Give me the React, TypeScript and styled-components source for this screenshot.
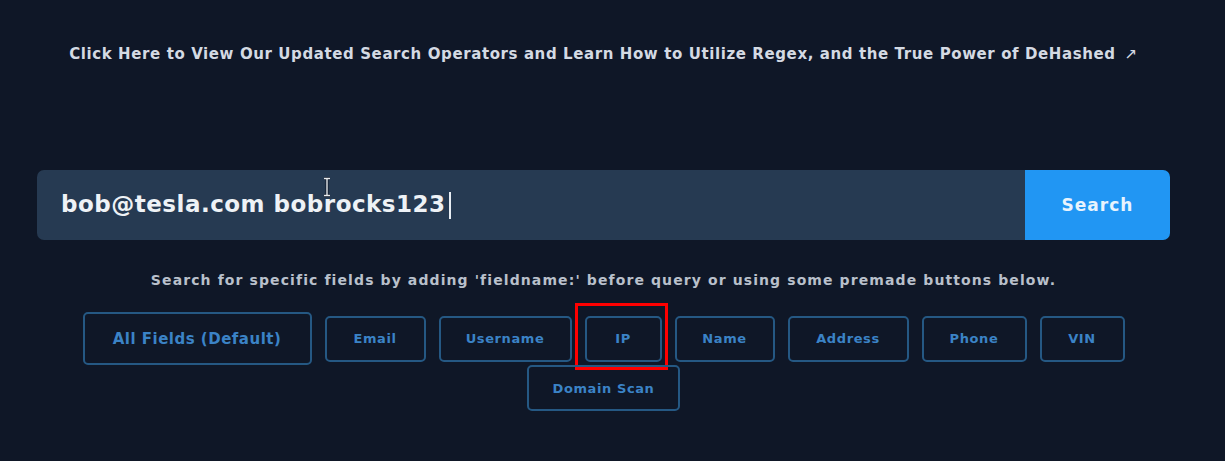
import React from "react";
import styled, { createGlobalStyle } from "styled-components";

const Global = createGlobalStyle`
  html, body { margin: 0; padding: 0; background: #0f1727; }
  body { font-family: "DejaVu Sans", "Noto Sans", sans-serif; }
`;

const Page = styled.div`
  width: 1225px;
  height: 461px;
  background: #0f1727;
  overflow: hidden;
`;

const Container = styled.div`
  width: 1133px;
  margin-left: 37px;
  display: flex;
  flex-direction: column;
  align-items: center;
`;

const InfoLink = styled.a`
  margin-top: 44px;
  font-size: 15px;
  font-weight: bold;
  letter-spacing: 0.6px;
  color: #d4dae3;
  text-decoration: none;
  line-height: 20px;
  white-space: nowrap;
`;

const Arrow = styled.span`
  margin-left: 9px;
  font-weight: normal;
`;

const SearchBar = styled.form`
  margin-top: 106px;
  width: 100%;
  height: 70px;
  display: flex;
  border-radius: 7px;
  overflow: hidden;
`;

const InputBox = styled.div`
  position: relative;
  flex: 1;
  background: #263a52;
  display: flex;
  align-items: center;
  padding-left: 24px;
`;

const InputText = styled.span`
  font-size: 23px;
  font-weight: bold;
  letter-spacing: 0.5px;
  color: #eef2f6;
  white-space: nowrap;
`;

const Caret = styled.span`
  display: inline-block;
  width: 2px;
  height: 27px;
  margin-left: 3px;
  background: #e8edf3;
  vertical-align: middle;
`;

const IBeam = styled.svg`
  position: absolute;
  left: 285px;
  top: 7px;
`;

const SearchButton = styled.button`
  width: 145px;
  border: none;
  background: #2196f3;
  color: #e8f3fd;
  font-family: inherit;
  font-size: 17px;
  font-weight: bold;
  letter-spacing: 1px;
`;

const Helper = styled.p`
  margin: 30px 0 0;
  font-size: 14px;
  font-weight: bold;
  letter-spacing: 1.1px;
  color: #b9c0cb;
  line-height: 20px;
  white-space: nowrap;
`;

const ButtonRow = styled.div`
  margin-top: 22px;
  width: 1060px;
  display: flex;
  flex-wrap: wrap;
  justify-content: center;
  align-items: center;
  column-gap: 13px;
`;

const FieldButton = styled.button<{ $big?: boolean; $w: number; $marked?: boolean }>`
  position: relative;
  width: ${(p) => p.$w}px;
  height: ${(p) => (p.$big ? 53 : 46)}px;
  background: transparent;
  border: 2px solid #255883;
  border-radius: 5px;
  color: #3b83c6;
  font-family: inherit;
  font-size: ${(p) => (p.$big ? 15 : 13)}px;
  font-weight: bold;
  letter-spacing: ${(p) => (p.$big ? 0.5 : 0.6)}px;
  padding: 0;
  ${(p) =>
    p.$marked &&
    `
    &::after {
      content: "";
      position: absolute;
      left: -12px;
      right: -8px;
      top: -15px;
      bottom: -10px;
      border: 3px solid #f00;
    }
  `}
`;

const buttons: { label: string; w: number; big?: boolean; marked?: boolean }[] = [
  { label: "All Fields (Default)", w: 229, big: true },
  { label: "Email", w: 101 },
  { label: "Username", w: 133 },
  { label: "IP", w: 77, marked: true },
  { label: "Name", w: 100 },
  { label: "Address", w: 121 },
  { label: "Phone", w: 105 },
  { label: "VIN", w: 85 },
  { label: "Domain Scan", w: 153 },
];

export default function App() {
  return (
    <Page>
      <Global />
      <Container>
        <InfoLink href="#">
          Click Here to View Our Updated Search Operators and Learn How to Utilize Regex, and the True Power of DeHashed
          <Arrow>↗</Arrow>
        </InfoLink>
        <SearchBar onSubmit={(e) => e.preventDefault()}>
          <InputBox>
            <InputText>
              bob@tesla.com bobrocks123
              <Caret />
            </InputText>
            <IBeam width="10" height="20" viewBox="0 0 10 20">
              <path d="M2 1.5h6M5 1.5v17M2 18.5h6" stroke="#0f1727" strokeWidth="3" fill="none" />
              <path d="M2 1.5h6M5 1.5v17M2 18.5h6" stroke="#e6eaee" strokeWidth="1.4" fill="none" />
            </IBeam>
          </InputBox>
          <SearchButton type="submit">Search</SearchButton>
        </SearchBar>
        <Helper>Search for specific fields by adding 'fieldname:' before query or using some premade buttons below.</Helper>
        <ButtonRow>
          {buttons.map((b) => (
            <FieldButton key={b.label} $w={b.w} $big={b.big} $marked={b.marked}>
              {b.label}
            </FieldButton>
          ))}
        </ButtonRow>
      </Container>
    </Page>
  );
}
